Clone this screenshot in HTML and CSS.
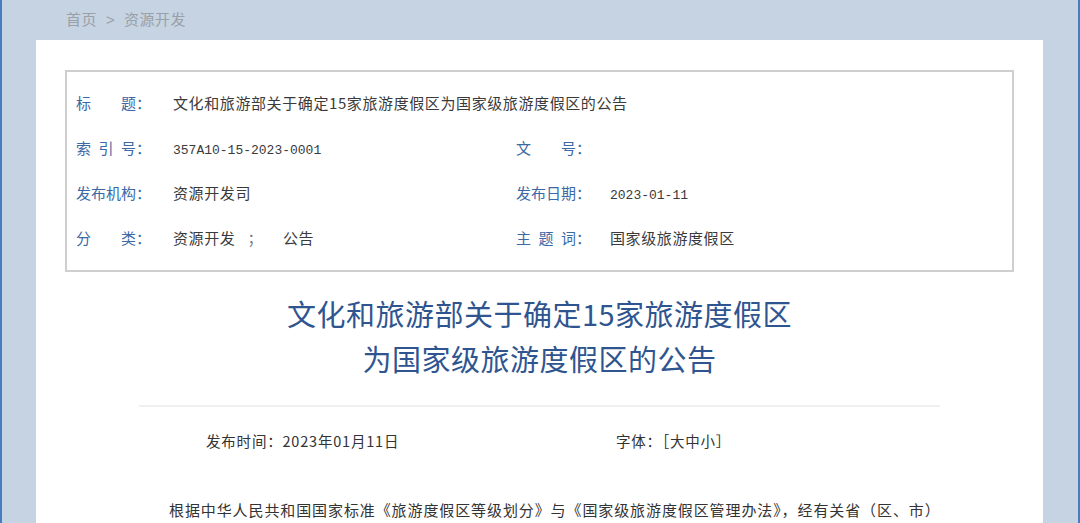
FILE: index.html
```html
<!DOCTYPE html>
<html>
    <head>
        <meta charset="utf-8">
        <link rel="stylesheet" href="styles.css">
    </head>
    <body>
        <div class="crumb">首页 <span class="arrow">&gt;</span> 资源开发</div>
        <div class="card">
            <div class="info-box">
                <div class="info-row">
                    <div class="cell wide">
                        <span class="label">标&ensp;&ensp;&ensp;&ensp;题：</span>
                        <span class="value">文化和旅游部关于确定15家旅游度假区为国家级旅游度假区的公告</span>
                    </div>
                </div>
                <div class="info-row">
                    <div class="cell">
                        <span class="label">索&ensp;引&ensp;号：</span>
                        <span class="value mono">357A10-15-2023-0001</span>
                    </div>
                    <div class="cell">
                        <span class="label">文&ensp;&ensp;&ensp;&ensp;号：</span>
                        <span class="value"></span>
                    </div>
                </div>
                <div class="info-row">
                    <div class="cell">
                        <span class="label">发布机构：</span>
                        <span class="value">资源开发司</span>
                    </div>
                    <div class="cell">
                        <span class="label">发布日期：</span>
                        <span class="value mono">2023-01-11</span>
                    </div>
                </div>
                <div class="info-row">
                    <div class="cell">
                        <span class="label">分&ensp;&ensp;&ensp;&ensp;类：</span>
                        <span class="value">资源开发<span class="sep">；</span>公告</span>
                    </div>
                    <div class="cell">
                        <span class="label">主&ensp;题&ensp;词：</span>
                        <span class="value">国家级旅游度假区</span>
                    </div>
                </div>
            </div>

            <h1 class="doc-title">文化和旅游部关于确定15家旅游度假区<br>为国家级旅游度假区的公告</h1>

            <div class="article">
                <div class="meta">
                    <span class="pub-time">发布时间：2023年01月11日</span>
                    <span class="font-size">字体：［大中小］</span>
                </div>
                <p class="para">根据中华人民共和国国家标准《旅游度假区等级划分》与《国家级旅游度假区管理办法》，经有关省（区、市）</p>
            </div>
        </div>
    </body>
</html>
```

FILE: styles.css
```css
body, html {
    margin: 0;
    padding: 0;
    height: 100%;
    overflow: hidden;
}

body {
    background-color: #c5d3e2;
    border-left: 2px solid #4a7cc0;
    border-right: 2px solid #4a7cc0;
    box-sizing: border-box;
    font-family: "Noto Sans CJK SC", "Liberation Sans", sans-serif;
}

.crumb {
    height: 40px;
    line-height: 38px;
    padding-left: 64px;
    font-size: 15px;
    letter-spacing: 0.5px;
    color: #9aa0a8;
}

.crumb .arrow {
    font-family: "Liberation Sans", sans-serif;
    margin: 0 5px;
}

.card {
    margin-left: 34px;
    width: 1007px;
    background: #fff;
    padding: 30px 29px 40px;
    box-sizing: border-box;
}

.info-box {
    border: 2px solid #cfcfcf;
    padding: 8px 0 10px 9px;
}

.info-row {
    display: flex;
    height: 45px;
    align-items: center;
    font-size: 15px;
    letter-spacing: 0.6px;
}

.cell {
    width: 440px;
    display: flex;
    align-items: baseline;
}

.cell.wide {
    width: auto;
}

.label {
    width: 97px;
    color: #3b69a6;
    flex-shrink: 0;
    letter-spacing: 0;
}

.cell + .cell .label {
    width: 94px;
}

.value {
    color: #3a3a3a;
}

.mono {
    font-family: "Liberation Mono", monospace;
    font-size: 13px;
    letter-spacing: 0;
}

.sep {
    margin: 0 20px 0 12px;
    color: #777;
}

.doc-title {
    margin: 19px 0 0;
    text-align: center;
    font-size: 29px;
    letter-spacing: 0.5px;
    line-height: 45px;
    font-weight: normal;
    color: #2f5590;
    padding-bottom: 24px;
}

.article {
    margin: 0 74px;
    border-top: 2px solid #f0f0f0;
}

.meta {
    display: flex;
    padding: 23px 0 0 67px;
    font-size: 14.5px;
    letter-spacing: 0.8px;
    color: #333;
    line-height: 22px;
}

.pub-time {
    width: 410px;
}

.para {
    margin: 46px 0 0;
    text-indent: 2em;
    font-size: 15px;
    letter-spacing: 0.9px;
    color: #333;
    line-height: 24px;
}
```
